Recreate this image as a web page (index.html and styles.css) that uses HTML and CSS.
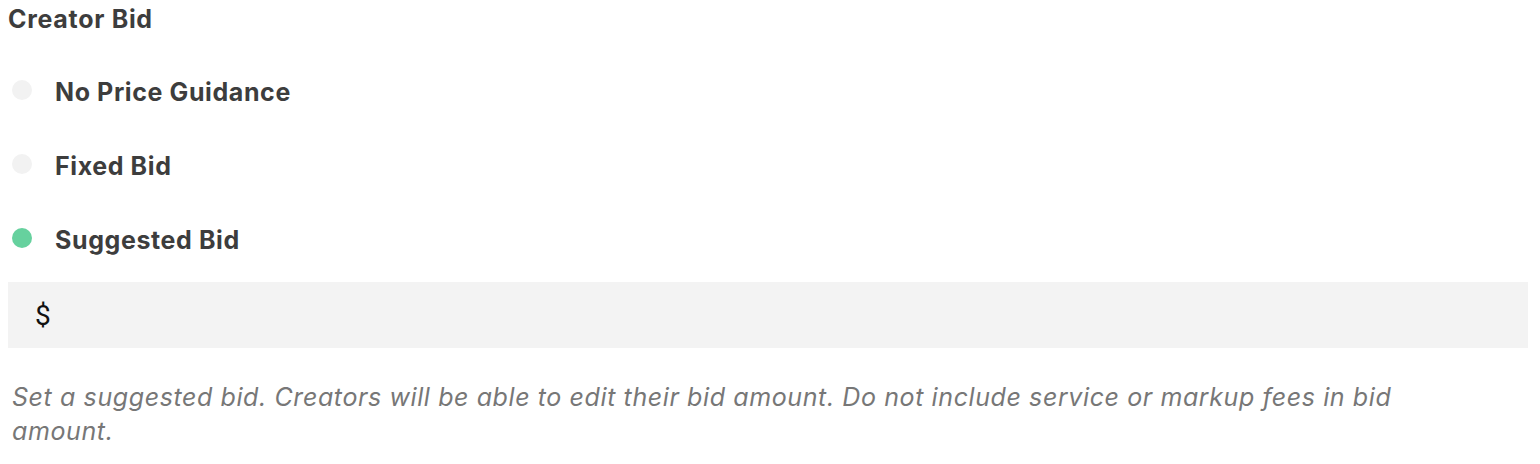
FILE: index.html
```html
<!DOCTYPE html>
<html>
<head>
<meta charset="utf-8">
<link rel="stylesheet" href="styles.css">
</head>
<body>
<div class="field">
  <div class="label">Creator Bid</div>
  <div class="options">
    <label class="option"><span class="dot"></span><span class="opt-text">No Price Guidance</span></label>
    <label class="option"><span class="dot"></span><span class="opt-text">Fixed Bid</span></label>
    <label class="option"><span class="dot active"></span><span class="opt-text">Suggested Bid</span></label>
  </div>
  <div class="input"><span class="currency">$</span></div>
  <p class="help">Set a suggested bid. Creators will be able to edit their bid amount. Do not include service or markup fees in bid amount.</p>
</div>
</body>
</html>
```
FILE: styles.css
```css
body {
  margin: 0;
  padding: 0 12px 0 8px;
  font-family: "Inter", "Liberation Sans", sans-serif;
  color: #3d3d3d;
  background: #fff;
}
.label {
  font-size: 25px;
  font-weight: 700;
  letter-spacing: 0.7px;
  line-height: 28px;
  padding-top: 5px;
}
.options {
  display: flex;
  flex-direction: column;
  gap: 46px;
  margin-top: 45px;
}
.option {
  display: flex;
  align-items: center;
  height: 28px;
}
.dot {
  flex: none;
  width: 20px;
  height: 20px;
  border-radius: 50%;
  background: #f2f2f2;
  margin-left: 4px;
  margin-right: 23px;
  margin-top: -4px;
}
.dot.active {
  background: #66d19e;
}
.opt-text {
  font-size: 25px;
  font-weight: 700;
  letter-spacing: 0.6px;
}
.input {
  margin-top: 28px;
  height: 66px;
  background: #f3f3f3;
  display: flex;
  align-items: center;
  padding-left: 27px;
}
.currency {
  font-family: "Roboto", sans-serif;
  font-size: 28px;
  color: #111;
}
.help {
  margin: 32px 60px 0 4px;
  font-size: 25px;
  font-style: italic;
  letter-spacing: 0.6px;
  line-height: 34px;
  color: #777;
}
```
